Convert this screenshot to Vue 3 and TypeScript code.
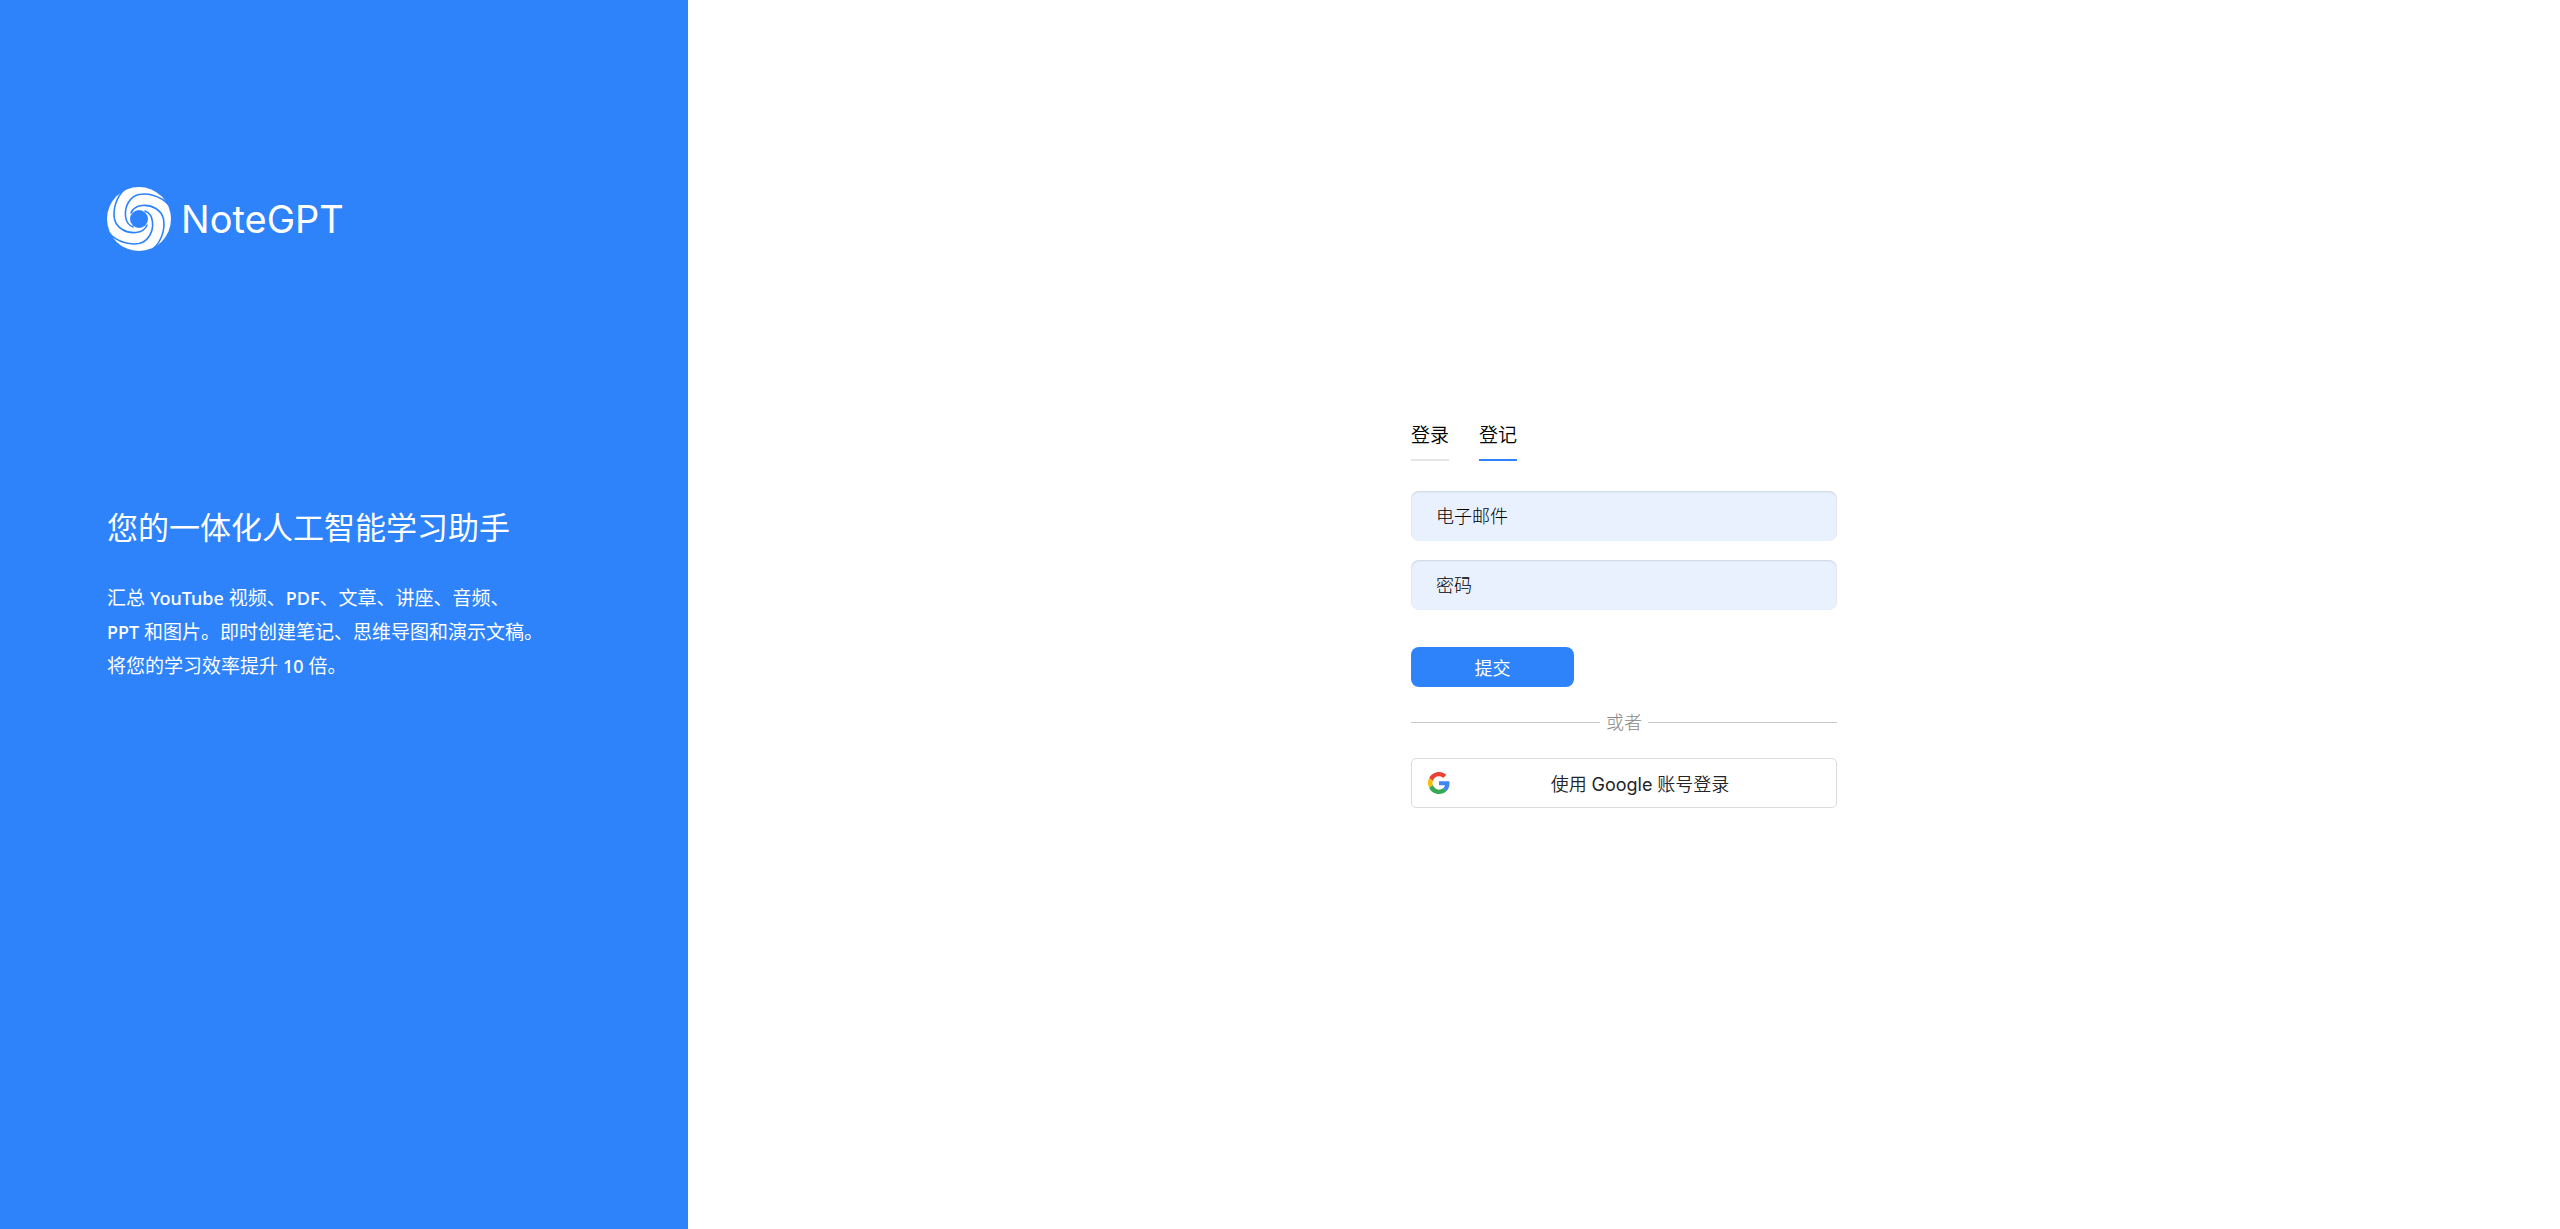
<script setup lang="ts">
import { ref } from 'vue'

type Tab = { id: string; label: string }

const tabs: Tab[] = [
  { id: 'login', label: '登录' },
  { id: 'register', label: '登记' },
]
const active = ref('register')
const email = ref('')
const password = ref('')
const arms = [0, 90, 180, 270]
</script>

<template>
  <div class="page">
    <aside class="brand">
      <div class="logo">
        <svg class="logo-mark" viewBox="-32 -32 64 64" aria-hidden="true">
          <circle r="32" fill="#fff" />
          <g fill="none" stroke="#2e83fb" stroke-width="1.6" stroke-linecap="round">
            <path
              v-for="a in arms"
              :key="a"
              :transform="`rotate(${a})`"
              d="M30 -14C21 -24 8 -26 0 -24.5C-9 -22.5 -14.5 -13 -13.5 -3C-13 2 -11 6 -6 8"
            />
          </g>
          <circle r="9" fill="#2e83fb" />
        </svg>
        <span class="logo-name">NoteGPT</span>
      </div>
      <h1>您的一体化人工智能学习助手</h1>
      <p>汇总 <span>YouTube</span> 视频、<span>PDF</span>、文章、讲座、音频、<br /><span>PPT</span> 和图片。即时创建笔记、思维导图和演示文稿。<br />将您的学习效率提升 <span>10</span> 倍。</p>
    </aside>

    <main class="content">
      <form class="form" @submit.prevent>
        <nav class="tabs">
          <button
            v-for="tab in tabs"
            :key="tab.id"
            type="button"
            class="tab"
            :class="{ active: tab.id === active }"
            @click="active = tab.id"
          >{{ tab.label }}</button>
        </nav>
        <input v-model="email" class="field" type="email" placeholder="电子邮件" aria-label="电子邮件" />
        <input v-model="password" class="field" type="password" placeholder="密码" aria-label="密码" />
        <button class="submit" type="submit">提交</button>
        <div class="divider"><span>或者</span></div>
        <button class="google" type="button">
          <svg viewBox="0 0 48 48" aria-hidden="true">
            <path fill="#EA4335" d="M24 9.5c3.54 0 6.71 1.22 9.21 3.6l6.85-6.85C35.9 2.38 30.47 0 24 0 14.62 0 6.51 5.38 2.56 13.22l7.98 6.19C12.43 13.72 17.74 9.5 24 9.5z" />
            <path fill="#4285F4" d="M46.98 24.55c0-1.57-.15-3.09-.38-4.55H24v9.02h12.94c-.58 2.96-2.26 5.48-4.78 7.18l7.73 6c4.51-4.18 7.09-10.36 7.09-17.65z" />
            <path fill="#FBBC05" d="M10.53 28.59c-.48-1.45-.76-2.99-.76-4.59s.27-3.14.76-4.59l-7.98-6.19C.92 16.46 0 20.12 0 24c0 3.88.92 7.54 2.56 10.78l7.97-6.19z" />
            <path fill="#34A853" d="M24 48c6.48 0 11.93-2.13 15.89-5.81l-7.73-6c-2.15 1.45-4.92 2.3-8.16 2.3-6.26 0-11.57-4.22-13.47-9.91l-7.98 6.19C6.51 42.62 14.62 48 24 48z" />
          </svg>
          <span>使用 <b>Google</b> 账号登录</span>
        </button>
      </form>
    </main>
  </div>
</template>

<style>
body {
  margin: 0;
  background: #fff;
}
</style>

<style scoped>
.page {
  display: flex;
  min-height: 100vh;
  font-family: "Open Sans", "Noto Sans CJK SC", sans-serif;
  color: #000;
}
.brand {
  flex: none;
  width: calc(100% * 43 / 160);
  box-sizing: border-box;
  padding: 187px 32px 32px 107px;
  background: #2e83fb;
  color: #fff;
  white-space: nowrap;
}
.logo {
  display: flex;
  align-items: center;
  gap: 10px;
}
.logo-mark {
  width: 64px;
  height: 64px;
}
.logo-name {
  font-family: Inter, sans-serif;
  font-size: 38px;
  line-height: 64px;
}
h1 {
  margin: 250px 0 0;
  font-size: 31px;
  line-height: 52px;
  font-weight: 400;
}
p {
  margin: 28px 0 0;
  font-size: 19px;
  line-height: 34px;
  font-weight: 400;
}
p span {
  font-family: "Noto Sans", sans-serif;
  font-size: 18px;
  font-weight: 500;
}
.content {
  flex: 1;
  display: flex;
  align-items: center;
  justify-content: center;
}
.form {
  display: flex;
  flex-direction: column;
  width: 426px;
}
button,
input {
  font-family: inherit;
}
.tabs {
  display: flex;
  gap: 30px;
  margin-bottom: 30px;
}
.tab {
  padding: 0 0 10px;
  border: 0;
  border-bottom: 2px solid #e6e6e6;
  background: none;
  font-size: 19px;
  line-height: 28px;
  font-weight: 350;
  color: #000;
  cursor: pointer;
}
.tab.active {
  border-color: #2e83fb;
}
.field {
  box-sizing: border-box;
  height: 50px;
  margin-bottom: 19px;
  padding: 0 25px;
  border: 0;
  border-radius: 8px;
  background: #e9f1fe;
  box-shadow: inset 0 1px 2px rgba(0, 0, 0, 0.12);
  font-size: 18px;
  font-weight: 300;
  color: #000;
}
.field::placeholder {
  color: #000;
  opacity: 1;
}
.submit {
  width: 163px;
  height: 40px;
  margin-top: 18px;
  padding: 0;
  border: 0;
  border-radius: 8px;
  background: #2e83fb;
  color: #fff;
  font-size: 18px;
  cursor: pointer;
}
.divider {
  display: flex;
  align-items: center;
  gap: 6px;
  margin: 22px 0;
  font-size: 18px;
  line-height: 27px;
  font-weight: 300;
  color: #888;
}
.divider::before,
.divider::after {
  content: "";
  flex: 1;
  height: 1px;
  background: #c8c8c8;
}
.google {
  display: flex;
  align-items: center;
  gap: 10px;
  height: 50px;
  padding: 0 16px;
  border: 1px solid #dadce0;
  border-radius: 5px;
  background: #fff;
  color: #222426;
  font-size: 18px;
  font-weight: 350;
  cursor: pointer;
}
.google svg {
  width: 22px;
  height: 22px;
}
.google span {
  flex: 1;
}
.google b {
  font-family: Inter, sans-serif;
  font-weight: 400;
}
</style>
